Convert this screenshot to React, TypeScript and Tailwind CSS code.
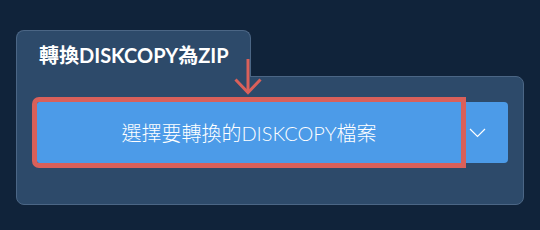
export default function App() {
  return (
    <div
      className="w-[540px] h-[230px] bg-[#10233a] pt-[30px] pl-[16px] relative"
      style={{ fontFamily: 'Lato, "Noto Sans CJK TC", sans-serif' }}
    >
      <div className="relative z-10 w-[235px] h-[47px] -mb-px bg-[#2d4a6a] border border-b-0 border-[#4b6685] rounded-t-[8px] pl-[22px] pt-[12px]">
        <span className="text-[20px] font-bold text-white leading-[24px]">
          轉換DISKCOPY為ZIP
        </span>
      </div>
      <div className="w-[508px] h-[129px] bg-[#2d4a6a] border border-[#4b6685] rounded-[8px] rounded-tl-none pl-[20px] pt-[25px]">
        <div className="flex">
          <div className="relative z-10 w-[424px] h-[61px] bg-[#4c9be8] rounded-l-[2px] outline-[5px] outline-solid outline-[#d9605a] flex items-center justify-center text-white text-[20px] font-light">
            選擇要轉換的DISKCOPY檔案
          </div>
          <div className="w-[47px] h-[61px] bg-[#4c9be8] rounded-r-[4px] flex items-center justify-center pr-[14px]">
            <svg width="17" height="10" viewBox="0 0 17 10" fill="none">
              <path d="M1 1 L8.5 8.5 L16 1" stroke="white" strokeWidth="1.2" />
            </svg>
          </div>
        </div>
      </div>
      <svg
        className="absolute left-[234px] top-[58px] z-20"
        width="30"
        height="38"
        viewBox="0 0 30 38"
        fill="none"
      >
        <path d="M14 1 V35" stroke="#d9605a" strokeWidth="3" />
        <path d="M1.5 21.5 L14 34.5 L26.5 21.5" stroke="#d9605a" strokeWidth="3" />
      </svg>
    </div>
  );
}
